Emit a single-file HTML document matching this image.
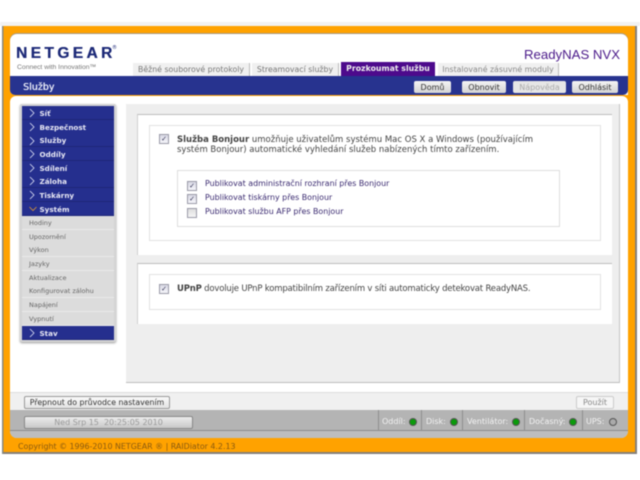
<!DOCTYPE html>
<html><head><meta charset="utf-8">
<style>
html,body{margin:0;padding:0;background:#fff;width:640px;height:480px;overflow:hidden}
#r{position:relative;width:640px;height:480px;overflow:hidden;font-family:"DejaVu Sans",Verdana,sans-serif;font-size:8px;color:#444;filter:blur(.4px)}
#r div{position:absolute;white-space:nowrap}
.tab{top:63px;height:13px;line-height:13px;background:#f0f0f0;color:#777;text-align:center;border-right:1px solid #bbb;box-sizing:border-box}
.btn{top:81px;height:12px;line-height:13px;background:linear-gradient(#f4f4f4,#d4d4d4);border-radius:2px;color:#333;text-align:center;font-size:8px}
.nav{left:22px;width:92px;height:13.6px;line-height:15px;background:#252f8e;color:#e8e8f4;font-weight:bold;font-size:7.2px;padding-left:17.500px;box-sizing:border-box;border-bottom:1px solid #1e2678}
.sub{left:22px;width:92px;height:13.6px;line-height:15px;background:#dcdcdc;color:#666;font-size:6.5px;padding-left:7px;box-sizing:border-box;border-bottom:1px solid #eaeaea}
.cb{width:8px;height:8px;border:1px solid #9a9aa8;background:linear-gradient(#d8d8e4,#f6f6fa);color:#335;font-size:7px;line-height:8px;text-align:center}
.led{width:6px;height:6px;border-radius:50%;background:#0a9a0a;border:1.5px solid #555;top:418px}
.st{top:417px;color:#f2f2f2;font-size:8px;line-height:10px}
.sep{top:410px;width:1px;height:21px;background:#8f8f8f}
</style></head><body><div id="r">
<div style="left:2px;top:26px;width:635px;height:428px;background:#ffa200;box-shadow:inset 1.5px 0 #8a8a80,inset -2px -2px #85807a"></div>
<div style="left:0;top:22px;width:640px;height:4px;background:#f2f2f2"></div>
<div style="left:10px;top:34px;width:618px;height:61px;background:#fff;border-radius:7px 7px 0 5px;box-shadow:0 -1px #a89a80"></div>
<div style="left:10px;top:96px;width:618px;height:342px;background:#fff;border-radius:6px 6px 7px 7px"></div>

<div style="left:16px;top:45px;font:bold 15.5px 'Liberation Sans',sans-serif;letter-spacing:3.4px;color:#1d2a78;text-shadow:.3px 0 #1d2a78">NETGEAR</div>
<div style="left:112px;top:45px;font-size:5px;color:#1d2a78">®</div>
<div style="left:17px;top:63.500px;font:6.8px 'Liberation Sans',sans-serif;color:#777">Connect with Innovation™</div>
<div style="left:524px;top:47px;font:13.2px 'Liberation Sans',sans-serif;color:#4b1a8a;line-height:16px">ReadyNAS NVX</div>

<div style="left:10px;top:76px;width:618px;height:19px;background:#27338f;border-radius:0 0 5px 5px"></div>
<div style="left:23px;top:81px;font-size:9.5px;color:#eef0fa;line-height:13px;text-shadow:.3px 0 #eef0fa">Služby</div>
<div class="tab" style="left:133px;width:117px;font-size:7.8px">Běžné souborové protokoly</div>
<div class="tab" style="left:252px;width:87px;font-size:7.8px">Streamovací služby</div>
<div class="tab" style="left:341px;width:94px;background:#4d0a8c;color:#eee;font-weight:bold;font-size:7.8px;border:0;top:62px;height:14px">Prozkoumat službu</div>
<div class="tab" style="left:438px;width:121px;font-size:7.8px;color:#888">Instalované zásuvné moduly</div>
<div class="btn" style="left:414px;width:37px">Domů</div>
<div class="btn" style="left:462px;width:44px">Obnovit</div>
<div class="btn" style="left:513px;width:53px;color:#aaa;background:#e6e6e6">Nápověda</div>
<div class="btn" style="left:572px;width:46px">Odhlásit</div>

<div style="left:20px;top:104px;width:96px;height:238px;background:#d4d4d4;border-radius:2px;box-shadow:0 1px 2px #999"></div>
<div class="nav" style="top:106px">Síť</div>
<div class="nav" style="top:120px">Bezpečnost</div>
<div class="nav" style="top:133px">Služby</div>
<div class="nav" style="top:147px">Oddíly</div>
<div class="nav" style="top:161px">Sdílení</div>
<div class="nav" style="top:174px">Záloha</div>
<div class="nav" style="top:188px">Tiskárny</div>
<div class="nav" style="top:202px">Systém</div>
<div class="sub" style="top:216px">Hodiny</div>
<div class="sub" style="top:230px">Upozornění</div>
<div class="sub" style="top:243px">Výkon</div>
<div class="sub" style="top:257px">Jazyky</div>
<div class="sub" style="top:271px">Aktualizace</div>
<div class="sub" style="top:284px">Konfigurovat zálohu</div>
<div class="sub" style="top:298px">Napájení</div>
<div class="sub" style="top:312px">Vypnutí</div>
<div class="nav" style="top:326px;height:14px">Stav</div>
<svg style="position:absolute;left:0;top:0" width="640" height="480" fill="none" stroke="#dfe2f5" stroke-width=".8">
<path d="M30 109l4 4-4 4M30 123l4 4-4 4M30 137l4 4-4 4M30 150l4 4-4 4M30 164l4 4-4 4M30 177l4 4-4 4M30 191l4 4-4 4M30 329l4 4-4 4"/>
<path d="M29.500 207l3.500 3.500 3.500-3.500" stroke="#e09a30"/>
</svg>

<div style="left:126px;top:104px;width:494px;height:279px;background:#eeeeee;border-right:1px solid #c4c4c4;border-bottom:1px solid #bdbdbd;box-sizing:border-box"></div>
<div style="left:137px;top:114px;width:475px;height:141px;background:#fff;border-top:1px solid #bdbdbd;border-left:1px solid #cfcfcf;box-sizing:border-box"></div>
<div style="left:149px;top:125px;width:452px;height:116px;background:#fff;border:1px solid #e2e2e2;box-sizing:border-box"></div>
<div class="cb" style="left:159px;top:134px">✓</div>
<div style="left:177px;top:134.500px;font-size:8.5px;line-height:10px;color:#444"><b>Služba Bonjour</b> umožňuje uživatelům systému Mac OS X a Windows (používajícím</div>
<div style="left:177px;top:144.500px;font-size:8.5px;line-height:10px;color:#444">systém Bonjour) automatické vyhledání služeb nabízených tímto zařízením.</div>
<div style="left:177px;top:170px;width:383px;height:57px;border:1px solid #dedede;background:#fff;box-sizing:border-box"></div>
<div class="cb" style="left:187px;top:181px">✓</div>
<div class="cb" style="left:187px;top:194px">✓</div>
<div class="cb" style="left:187px;top:208px;background:linear-gradient(#ddd,#f6f6f6)"></div>
<div style="left:205px;top:179px;font-size:7.9px;line-height:10px;color:#3a2a70">Publikovat administrační rozhraní přes Bonjour</div>
<div style="left:205px;top:193px;font-size:7.9px;line-height:10px;color:#3a2a70">Publikovat tiskárny přes Bonjour</div>
<div style="left:205px;top:207px;font-size:7.9px;line-height:10px;color:#3a2a70">Publikovat službu AFP přes Bonjour</div>

<div style="left:137px;top:263px;width:475px;height:61px;background:#fff;border-top:1px solid #bdbdbd;border-left:1px solid #cfcfcf;box-sizing:border-box"></div>
<div style="left:149px;top:274px;width:452px;height:36px;border:1px solid #e2e2e2;background:#fff;box-sizing:border-box"></div>
<div class="cb" style="left:159px;top:284px">✓</div>
<div style="left:177px;top:284px;font-size:8.5px;letter-spacing:-.19px;line-height:10px;color:#444"><b>UPnP</b> dovoluje UPnP kompatibilním zařízením v síti automaticky detekovat ReadyNAS.</div>

<div style="left:10px;top:392px;width:618px;height:18px;background:#f0f0f0;border-top:1px solid #ddd;box-sizing:border-box"></div>
<div style="left:24px;top:396px;width:146px;height:13px;line-height:12px;box-sizing:border-box;border:1px solid #999;border-radius:2px;background:linear-gradient(#fafafa,#e4e4e4);color:#333;font-size:7.8px;text-align:center">Přepnout do průvodce nastavením</div>
<div style="left:576px;top:396px;width:38px;height:13px;line-height:12px;box-sizing:border-box;border:1px solid #ccc;border-radius:2px;background:#f6f6f6;color:#888;font-size:8px;text-align:center">Použít</div>

<div style="left:10px;top:410px;width:618px;height:28px;background:#b4b4b4;border-radius:0 0 7px 7px;overflow:hidden"><div style="left:0;top:20px;width:618px;height:1px;background:#8c8c8c"></div><div style="left:0;top:21px;width:618px;height:7px;background:#bdbdbd"></div></div>
<div style="left:24px;top:416px;width:169px;height:13px;line-height:12px;box-sizing:border-box;border:1px solid #888;border-radius:2px;background:linear-gradient(#ececec,#c8c8c8);color:#999;font-size:8px;text-align:center">Ned Srp 15&nbsp; 20:25:05 2010</div>

<div class="sep" style="left:378px"></div><div class="sep" style="left:421px"></div><div class="sep" style="left:462px"></div><div class="sep" style="left:524px"></div><div class="sep" style="left:582px"></div>
<div class="st" style="left:382px">Oddíl:</div><div class="led" style="left:409px"></div>
<div class="st" style="left:426px">Disk:</div><div class="led" style="left:450px"></div>
<div class="st" style="left:467px">Ventilátor:</div><div class="led" style="left:512px"></div>
<div class="st" style="left:529px">Dočasný:</div><div class="led" style="left:569px"></div>
<div class="st" style="left:586px">UPS:</div><div class="led" style="left:609px;background:#aaa"></div>

<div style="left:18px;top:442px;font-size:7.9px;line-height:10px;color:#8a5a10">Copyright © 1996-2010 NETGEAR ® | RAIDiator 4.2.13</div>
</div></body></html>
